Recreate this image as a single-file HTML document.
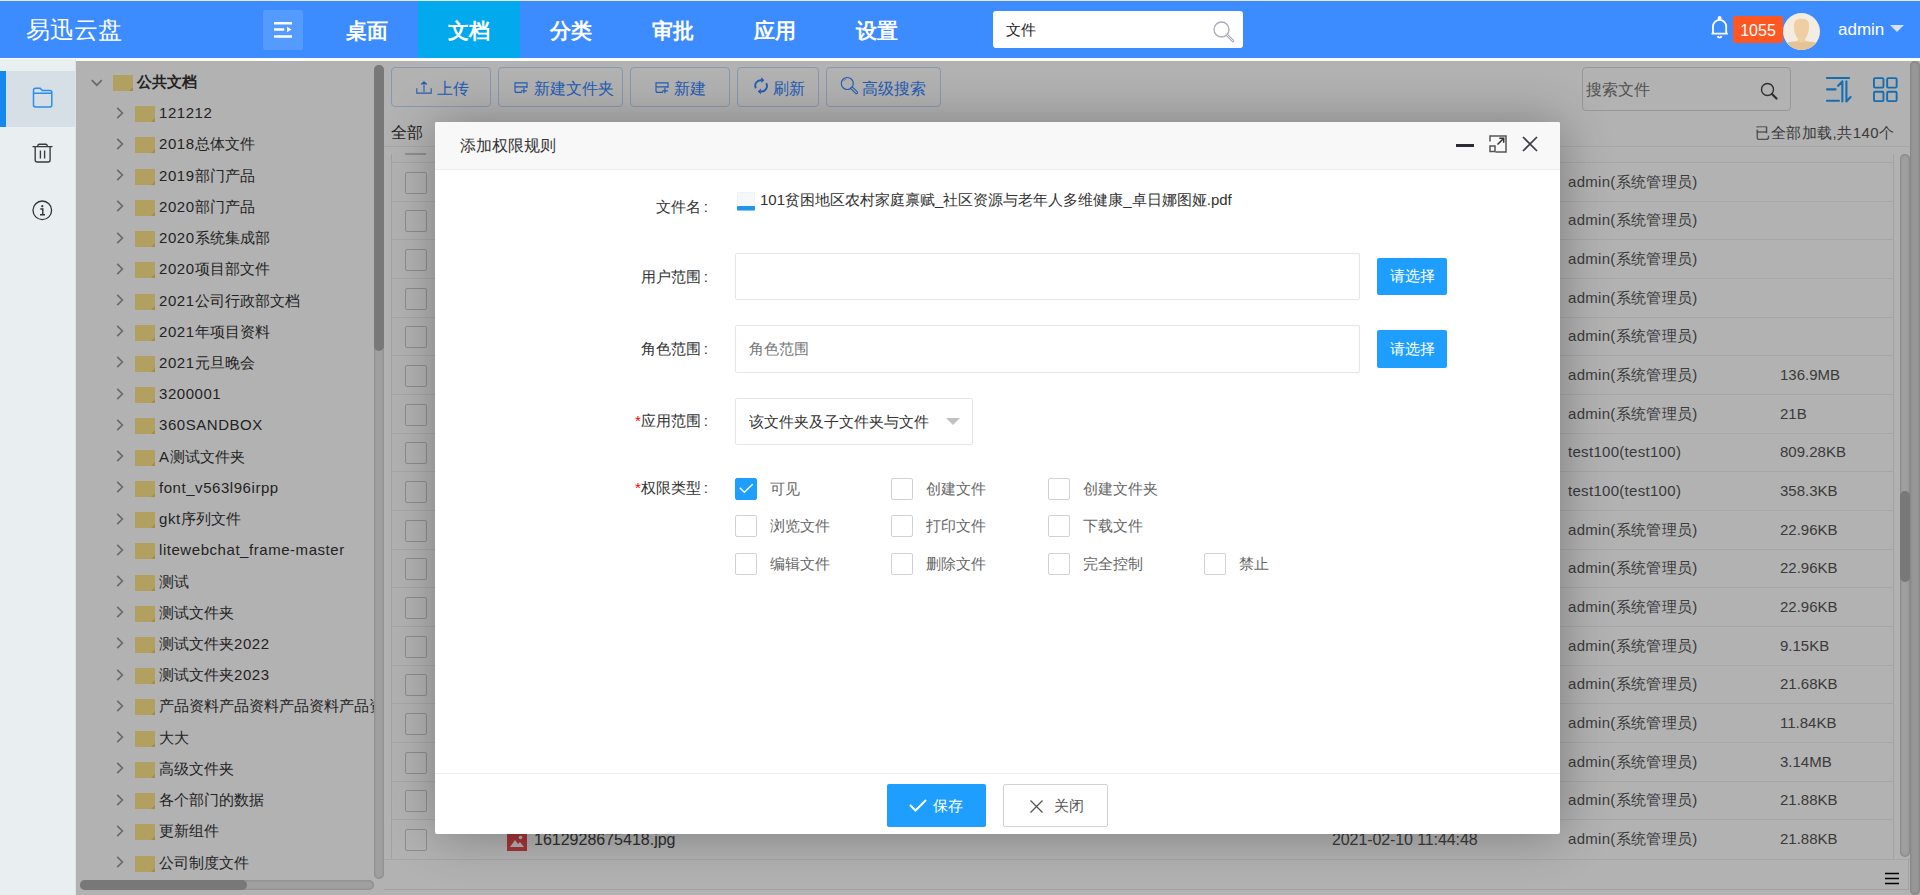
<!DOCTYPE html>
<html><head><meta charset="utf-8">
<style>
*{margin:0;padding:0;box-sizing:border-box}
html,body{width:1920px;height:895px;overflow:hidden;background:#fff;font-family:"Liberation Sans",sans-serif;color:#333}
.a{position:absolute}
#topline{left:0;top:0;width:1920px;height:1px;background:#ece6dc}
#header{left:0;top:1px;width:1920px;height:57px;background:#3d8cff;color:#fff}
#logo{left:26px;top:12px;font-size:24px;line-height:34px}
#tog{left:263px;top:9px;width:40px;height:40px;border-radius:3px;background:rgba(255,255,255,.12)}
.nav{top:0;height:57px;width:102px;line-height:59px;text-align:center;font-size:21px;font-weight:bold}
.nav.on{background:#02a9ed}
#hsearch{left:993px;top:10px;width:250px;height:37px;background:#fff;border-radius:3px}
#hsearch span{position:absolute;left:13px;top:9px;font-size:15px;line-height:20px;color:#222}
#badge{left:1733px;top:15px;width:50px;height:27px;background:#ff5722;border-radius:2px;font-size:16px;line-height:29px;text-align:center;color:#fff}
#avatar{left:1783px;top:12px;width:37px;height:37px;border-radius:50%;background:#f4ebe1;overflow:hidden}
#uname{left:1838px;top:17px;font-size:17px;line-height:24px;color:#fff}
#caret{left:1890px;top:24px;width:0;height:0;border-left:7px solid transparent;border-right:7px solid transparent;border-top:7px solid #d2e2ff}
#sidebar{left:0;top:59px;width:76px;height:836px;background:#e9eef1;border-right:1px solid #dfe3e6}
#sideon{left:0;top:12px;width:75px;height:56px;background:#d5dfe5}
#sideon i{position:absolute;left:0;top:0;width:6px;height:56px;background:#1488f0}
#main{left:76px;top:59px;width:1844px;height:836px;background:#fff}
.tr{left:0;height:31px;width:298px;white-space:nowrap;overflow:hidden;font-size:15px;line-height:31px;color:#333}
.chev{position:absolute;width:8px;height:8px;border-right:1.8px solid #8a8a8a;border-bottom:1.8px solid #8a8a8a}
.lat{letter-spacing:0.55px}
.fold{position:absolute;width:20px;height:16px;background:#ffe68c}
.fold:after{content:'';position:absolute;right:0;bottom:0;width:0;height:0;border-left:4px solid transparent;border-bottom:4px solid #eccb62}
.tbtn{top:8px;height:40px;border:1px solid #c0dcff;border-radius:4px;color:#3585ff;font-size:16px;line-height:42px}
.cb{width:22px;height:22px;border:1px solid #ccc;border-radius:2px;background:#fff}
.rl{height:1px;background:#f0f0f0}
.cell{font-size:15px;line-height:20px;color:#555;white-space:nowrap}
#mask{left:76px;top:61px;width:1844px;height:834px;background:rgba(0,0,0,.3)}
#modal{left:435px;top:122px;width:1125px;height:712px;background:#fff;border-radius:2px;box-shadow:1px 1px 50px rgba(0,0,0,.3)}
#mhead{left:0;top:0;width:1125px;height:48px;background:#f8f8f8;border-bottom:1px solid #eee;border-radius:2px 2px 0 0}
#mtitle{left:25px;top:13px;font-size:16px;line-height:22px;color:#333}
#mfoot{left:0;top:651px;width:1125px;height:1px;background:#eee}
.lab{width:200px;text-align:right;font-size:15px;line-height:20px;color:#333}
.lab b{color:#f00;font-weight:normal}
.col{font-style:normal;margin-left:3px;margin-right:-1px}
.inp{border:1px solid #e6e6e6;border-radius:2px;background:#fff}
.bbtn{background:#1e9fff;color:#fff;border-radius:2px;text-align:center;font-size:15px}
.ck{width:22px;height:22px;border:1px solid #d2d2d2;border-radius:2px;background:#fff}
.ckl{font-size:15px;line-height:20px;color:#666;white-space:nowrap}
</style></head>
<body>
<div id="topline" class="a"></div>
<div id="header" class="a">
<div id="logo" class="a">易迅云盘</div>
<div id="tog" class="a"><svg class="a" style="left:10px;top:12px" width="20" height="17" viewBox="0 0 20 17"><path d="M1 1.2H19M1 7.5H11.2M1 14.5H19" stroke="#fff" stroke-width="2.4"/><path d="M14 4.8L18.5 7.6L14 10.3Z" fill="#fff"/></svg></div>
<div class="a nav" style="left:316px">桌面</div>
<div class="a nav on" style="left:418px">文档</div>
<div class="a nav" style="left:520px">分类</div>
<div class="a nav" style="left:622px">审批</div>
<div class="a nav" style="left:724px">应用</div>
<div class="a nav" style="left:826px">设置</div>
<div id="hsearch" class="a"><span>文件</span><svg class="a" style="left:219px;top:9px" width="24" height="24" viewBox="0 0 24 24"><circle cx="9.5" cy="9.5" r="7.5" fill="none" stroke="#aab" stroke-width="1.3"/><path d="M15 15L21 21" stroke="#aab" stroke-width="2.6" stroke-linecap="round"/><path d="M14.8 14.8L21 21" stroke="#fff" stroke-width="0.8" stroke-linecap="round"/></svg></div>
<svg class="a" style="left:1710px;top:14px" width="20" height="25" viewBox="0 0 20 25"><circle cx="9.6" cy="3" r="2" fill="#fff"/><path d="M3 18.3V11.5A6.6 6.6 0 0 1 16.2 11.5V18.3M1.5 18.6H17.8" fill="none" stroke="#fff" stroke-width="1.8"/><path d="M7.5 21.3A2.4 2.4 0 0 0 11.7 21.3" fill="none" stroke="#fff" stroke-width="1.8"/></svg>
<div id="badge" class="a">1055</div>
<div id="avatar" class="a"><svg class="a" style="left:0;top:0" width="37" height="37" viewBox="0 0 37 37"><path d="M0 37V31Q8 28.5 14.5 28L15 26Q11.5 22 11 15V11Q11.5 5.8 18.5 5.8Q25.5 5.8 26 11V15Q25.5 22 22 26L22.5 28Q29 28.5 37 31V37Z" fill="#efcfa1"/><path d="M0 37V30.5Q8 28.5 14.5 28.5Q18.5 30.5 22.5 28.5Q29 28.5 37 30.5V37Z" fill="#e5c399"/></svg></div>
<div id="uname" class="a">admin</div>
<div id="caret" class="a"></div>
</div>
<div id="sidebar" class="a"><div id="sideon" class="a"><i></i></div>
<svg class="a" style="left:32px;top:28px" width="21" height="21" viewBox="0 0 21 21"><path d="M1.5 3.2Q1.5 1.2 3.5 1.2H8.2L10.2 3.4H18Q19.8 3.4 19.8 5.2V18.2Q19.8 19.9 18 19.9H3.5Q1.5 19.9 1.5 18V3.2ZM1.5 6.3H19.8" fill="none" stroke="#2a8ef0" stroke-width="1.5"/></svg>
<svg class="a" style="left:32px;top:84px" width="21" height="21" viewBox="0 0 21 21"><path d="M0.5 3.6H20.5M5.8 3.6V2.8Q5.8 1.2 7.4 1.2H13.6Q15.2 1.2 15.2 2.8V3.6M3.2 3.6V17Q3.2 19 5.2 19H16.1Q18.1 19 18.1 17V3.6M8.4 7.6V15.4M12.6 7.6V15.4" fill="none" stroke="#3a3a3a" stroke-width="1.35"/></svg>
<svg class="a" style="left:32px;top:141px" width="21" height="21" viewBox="0 0 21 21"><circle cx="10.3" cy="10.3" r="9.3" fill="none" stroke="#333" stroke-width="1.3"/><circle cx="10.3" cy="6.2" r="1.1" fill="#333"/><path d="M8.3 9H10.8V14.5M8 14.7H13" fill="none" stroke="#333" stroke-width="1.4"/></svg>
</div>
<div id="main" class="a"></div>
<div class="a" style="left:76px;top:61px;width:298px;height:818px;overflow:hidden">
<div class="a tr" style="top:5.00px;font-weight:bold"><svg class="a" style="left:14.5px;top:12.5px" width="12" height="8" viewBox="0 0 12 8"><path d="M0.8 1.2L5.8 6.2L10.8 1.2" fill="none" stroke="#999" stroke-width="1.7"/></svg><i class="fold" style="left:37px;top:9px"></i><span class="a" style="left:61px;top:0">公共文档</span></div>
<div class="a tr" style="top:36.22px"><svg class="a" style="left:39.5px;top:9.5px" width="8" height="13" viewBox="0 0 8 13"><path d="M1.2 0.8L6.4 6L1.2 11.2" fill="none" stroke="#999" stroke-width="1.7"/></svg><i class="fold" style="left:59px;top:9px"></i><span class="a" style="left:83px;top:0"><span class="lat">121212</span></span></div>
<div class="a tr" style="top:67.44px"><svg class="a" style="left:39.5px;top:9.5px" width="8" height="13" viewBox="0 0 8 13"><path d="M1.2 0.8L6.4 6L1.2 11.2" fill="none" stroke="#999" stroke-width="1.7"/></svg><i class="fold" style="left:59px;top:9px"></i><span class="a" style="left:83px;top:0"><span class="lat">2018</span>总体文件</span></div>
<div class="a tr" style="top:98.66px"><svg class="a" style="left:39.5px;top:9.5px" width="8" height="13" viewBox="0 0 8 13"><path d="M1.2 0.8L6.4 6L1.2 11.2" fill="none" stroke="#999" stroke-width="1.7"/></svg><i class="fold" style="left:59px;top:9px"></i><span class="a" style="left:83px;top:0"><span class="lat">2019</span>部门产品</span></div>
<div class="a tr" style="top:129.88px"><svg class="a" style="left:39.5px;top:9.5px" width="8" height="13" viewBox="0 0 8 13"><path d="M1.2 0.8L6.4 6L1.2 11.2" fill="none" stroke="#999" stroke-width="1.7"/></svg><i class="fold" style="left:59px;top:9px"></i><span class="a" style="left:83px;top:0"><span class="lat">2020</span>部门产品</span></div>
<div class="a tr" style="top:161.10px"><svg class="a" style="left:39.5px;top:9.5px" width="8" height="13" viewBox="0 0 8 13"><path d="M1.2 0.8L6.4 6L1.2 11.2" fill="none" stroke="#999" stroke-width="1.7"/></svg><i class="fold" style="left:59px;top:9px"></i><span class="a" style="left:83px;top:0"><span class="lat">2020</span>系统集成部</span></div>
<div class="a tr" style="top:192.32px"><svg class="a" style="left:39.5px;top:9.5px" width="8" height="13" viewBox="0 0 8 13"><path d="M1.2 0.8L6.4 6L1.2 11.2" fill="none" stroke="#999" stroke-width="1.7"/></svg><i class="fold" style="left:59px;top:9px"></i><span class="a" style="left:83px;top:0"><span class="lat">2020</span>项目部文件</span></div>
<div class="a tr" style="top:223.54px"><svg class="a" style="left:39.5px;top:9.5px" width="8" height="13" viewBox="0 0 8 13"><path d="M1.2 0.8L6.4 6L1.2 11.2" fill="none" stroke="#999" stroke-width="1.7"/></svg><i class="fold" style="left:59px;top:9px"></i><span class="a" style="left:83px;top:0"><span class="lat">2021</span>公司行政部文档</span></div>
<div class="a tr" style="top:254.76px"><svg class="a" style="left:39.5px;top:9.5px" width="8" height="13" viewBox="0 0 8 13"><path d="M1.2 0.8L6.4 6L1.2 11.2" fill="none" stroke="#999" stroke-width="1.7"/></svg><i class="fold" style="left:59px;top:9px"></i><span class="a" style="left:83px;top:0"><span class="lat">2021</span>年项目资料</span></div>
<div class="a tr" style="top:285.98px"><svg class="a" style="left:39.5px;top:9.5px" width="8" height="13" viewBox="0 0 8 13"><path d="M1.2 0.8L6.4 6L1.2 11.2" fill="none" stroke="#999" stroke-width="1.7"/></svg><i class="fold" style="left:59px;top:9px"></i><span class="a" style="left:83px;top:0"><span class="lat">2021</span>元旦晚会</span></div>
<div class="a tr" style="top:317.20px"><svg class="a" style="left:39.5px;top:9.5px" width="8" height="13" viewBox="0 0 8 13"><path d="M1.2 0.8L6.4 6L1.2 11.2" fill="none" stroke="#999" stroke-width="1.7"/></svg><i class="fold" style="left:59px;top:9px"></i><span class="a" style="left:83px;top:0"><span class="lat">3200001</span></span></div>
<div class="a tr" style="top:348.42px"><svg class="a" style="left:39.5px;top:9.5px" width="8" height="13" viewBox="0 0 8 13"><path d="M1.2 0.8L6.4 6L1.2 11.2" fill="none" stroke="#999" stroke-width="1.7"/></svg><i class="fold" style="left:59px;top:9px"></i><span class="a" style="left:83px;top:0"><span class="lat">360SANDBOX</span></span></div>
<div class="a tr" style="top:379.64px"><svg class="a" style="left:39.5px;top:9.5px" width="8" height="13" viewBox="0 0 8 13"><path d="M1.2 0.8L6.4 6L1.2 11.2" fill="none" stroke="#999" stroke-width="1.7"/></svg><i class="fold" style="left:59px;top:9px"></i><span class="a" style="left:83px;top:0"><span class="lat">A</span>测试文件夹</span></div>
<div class="a tr" style="top:410.86px"><svg class="a" style="left:39.5px;top:9.5px" width="8" height="13" viewBox="0 0 8 13"><path d="M1.2 0.8L6.4 6L1.2 11.2" fill="none" stroke="#999" stroke-width="1.7"/></svg><i class="fold" style="left:59px;top:9px"></i><span class="a" style="left:83px;top:0"><span class="lat">font_v563l96irpp</span></span></div>
<div class="a tr" style="top:442.08px"><svg class="a" style="left:39.5px;top:9.5px" width="8" height="13" viewBox="0 0 8 13"><path d="M1.2 0.8L6.4 6L1.2 11.2" fill="none" stroke="#999" stroke-width="1.7"/></svg><i class="fold" style="left:59px;top:9px"></i><span class="a" style="left:83px;top:0"><span class="lat">gkt</span>序列文件</span></div>
<div class="a tr" style="top:473.30px"><svg class="a" style="left:39.5px;top:9.5px" width="8" height="13" viewBox="0 0 8 13"><path d="M1.2 0.8L6.4 6L1.2 11.2" fill="none" stroke="#999" stroke-width="1.7"/></svg><i class="fold" style="left:59px;top:9px"></i><span class="a" style="left:83px;top:0"><span class="lat">litewebchat_frame-master</span></span></div>
<div class="a tr" style="top:504.52px"><svg class="a" style="left:39.5px;top:9.5px" width="8" height="13" viewBox="0 0 8 13"><path d="M1.2 0.8L6.4 6L1.2 11.2" fill="none" stroke="#999" stroke-width="1.7"/></svg><i class="fold" style="left:59px;top:9px"></i><span class="a" style="left:83px;top:0">测试</span></div>
<div class="a tr" style="top:535.74px"><svg class="a" style="left:39.5px;top:9.5px" width="8" height="13" viewBox="0 0 8 13"><path d="M1.2 0.8L6.4 6L1.2 11.2" fill="none" stroke="#999" stroke-width="1.7"/></svg><i class="fold" style="left:59px;top:9px"></i><span class="a" style="left:83px;top:0">测试文件夹</span></div>
<div class="a tr" style="top:566.96px"><svg class="a" style="left:39.5px;top:9.5px" width="8" height="13" viewBox="0 0 8 13"><path d="M1.2 0.8L6.4 6L1.2 11.2" fill="none" stroke="#999" stroke-width="1.7"/></svg><i class="fold" style="left:59px;top:9px"></i><span class="a" style="left:83px;top:0">测试文件夹<span class="lat">2022</span></span></div>
<div class="a tr" style="top:598.18px"><svg class="a" style="left:39.5px;top:9.5px" width="8" height="13" viewBox="0 0 8 13"><path d="M1.2 0.8L6.4 6L1.2 11.2" fill="none" stroke="#999" stroke-width="1.7"/></svg><i class="fold" style="left:59px;top:9px"></i><span class="a" style="left:83px;top:0">测试文件夹<span class="lat">2023</span></span></div>
<div class="a tr" style="top:629.40px"><svg class="a" style="left:39.5px;top:9.5px" width="8" height="13" viewBox="0 0 8 13"><path d="M1.2 0.8L6.4 6L1.2 11.2" fill="none" stroke="#999" stroke-width="1.7"/></svg><i class="fold" style="left:59px;top:9px"></i><span class="a" style="left:83px;top:0">产品资料产品资料产品资料产品资料产品资料</span></div>
<div class="a tr" style="top:660.62px"><svg class="a" style="left:39.5px;top:9.5px" width="8" height="13" viewBox="0 0 8 13"><path d="M1.2 0.8L6.4 6L1.2 11.2" fill="none" stroke="#999" stroke-width="1.7"/></svg><i class="fold" style="left:59px;top:9px"></i><span class="a" style="left:83px;top:0">大大</span></div>
<div class="a tr" style="top:691.84px"><svg class="a" style="left:39.5px;top:9.5px" width="8" height="13" viewBox="0 0 8 13"><path d="M1.2 0.8L6.4 6L1.2 11.2" fill="none" stroke="#999" stroke-width="1.7"/></svg><i class="fold" style="left:59px;top:9px"></i><span class="a" style="left:83px;top:0">高级文件夹</span></div>
<div class="a tr" style="top:723.06px"><svg class="a" style="left:39.5px;top:9.5px" width="8" height="13" viewBox="0 0 8 13"><path d="M1.2 0.8L6.4 6L1.2 11.2" fill="none" stroke="#999" stroke-width="1.7"/></svg><i class="fold" style="left:59px;top:9px"></i><span class="a" style="left:83px;top:0">各个部门的数据</span></div>
<div class="a tr" style="top:754.28px"><svg class="a" style="left:39.5px;top:9.5px" width="8" height="13" viewBox="0 0 8 13"><path d="M1.2 0.8L6.4 6L1.2 11.2" fill="none" stroke="#999" stroke-width="1.7"/></svg><i class="fold" style="left:59px;top:9px"></i><span class="a" style="left:83px;top:0">更新组件</span></div>
<div class="a tr" style="top:785.50px"><svg class="a" style="left:39.5px;top:9.5px" width="8" height="13" viewBox="0 0 8 13"><path d="M1.2 0.8L6.4 6L1.2 11.2" fill="none" stroke="#999" stroke-width="1.7"/></svg><i class="fold" style="left:59px;top:9px"></i><span class="a" style="left:83px;top:0">公司制度文件</span></div>
</div>
<div class="a" style="left:374px;top:65px;width:10px;height:814px;background:#e6e6e6;border-radius:5px;box-shadow:inset 0 0 3px rgba(0,0,0,.25)"></div>
<div class="a" style="left:374px;top:65px;width:10px;height:286px;background:#acacac;border-radius:5px"></div>
<div class="a" style="left:80px;top:880px;width:294px;height:10px;background:#e6e6e6;border-radius:5px;box-shadow:inset 0 0 3px rgba(0,0,0,.25)"></div>
<div class="a" style="left:80px;top:880px;width:167px;height:10px;background:#acacac;border-radius:5px"></div>
<div class="a tbtn" style="left:391px;top:67px;width:100px"><svg class="a" style="left:24px;top:13px" width="16" height="14" viewBox="0 0 16 14"><path d="M0.8 7.2V12.1H15.2V7.2M8 11V0.8M5.2 3.5L8 0.8L10.8 3.5" fill="none" stroke="#3585ff" stroke-width="1.1"/></svg><span class="a" style="left:45px;top:0">上传</span></div>
<div class="a tbtn" style="left:498px;top:67px;width:125px"><svg class="a" style="left:15px;top:14px" width="14" height="12" viewBox="0 0 14 12"><path d="M8 10.4H2.6Q1 10.4 1 8.8V0.8H13V6M1 4.8H13M9.9 5.8V11.3M7.2 8.9H12.9" fill="none" stroke="#3585ff" stroke-width="1.15"/></svg><span class="a" style="left:35px;top:0">新建文件夹</span></div>
<div class="a tbtn" style="left:630px;top:67px;width:100px"><svg class="a" style="left:24px;top:14px" width="14" height="12" viewBox="0 0 14 12"><path d="M8 10.4H2.6Q1 10.4 1 8.8V0.8H13V6M1 4.8H13M9.9 5.8V11.3M7.2 8.9H12.9" fill="none" stroke="#3585ff" stroke-width="1.15"/></svg><span class="a" style="left:43px;top:0">新建</span></div>
<div class="a tbtn" style="left:737px;top:67px;width:82px"><svg class="a" style="left:16px;top:9px" width="14" height="18" viewBox="0 0 14 18"><path d="M1.9 11.3A5.5 5.5 0 0 1 7.6 3.3M12.2 6.2A5.5 5.5 0 0 1 6.5 14.4" fill="none" stroke="#3585ff" stroke-width="1.9"/><path d="M7.2 0.3L10.4 3.2L7.2 6Z M6.9 11.5L3.7 14.4L6.9 17.3Z" fill="#3585ff"/></svg><span class="a" style="left:35px;top:0">刷新</span></div>
<div class="a tbtn" style="left:826px;top:67px;width:115px"><svg class="a" style="left:12px;top:7px" width="20" height="20" viewBox="0 0 20 20"><circle cx="8.3" cy="8.5" r="6" fill="none" stroke="#3585ff" stroke-width="1.15"/><path d="M12.9 13.1L17.4 17.5" stroke="#3585ff" stroke-width="3.3" stroke-linecap="round"/><path d="M12.9 13.1L17.4 17.5" stroke="#fff" stroke-width="1.1" stroke-linecap="round"/><path d="M4.6 6.2A4 4 0 0 1 7.5 4" fill="none" stroke="#3585ff" stroke-width="0.8" opacity=".6"/></svg><span class="a" style="left:35px;top:0">高级搜索</span></div>
<div class="a" style="left:1582px;top:67px;width:209px;height:44px;border:1px solid #d9d9d9;border-radius:4px;background:#fff"><span class="a" style="left:3px;top:12px;font-size:16px;line-height:20px;color:#757575">搜索文件</span><svg class="a" style="left:177px;top:14px" width="18" height="18" viewBox="0 0 18 18"><circle cx="7.5" cy="7.5" r="6" fill="none" stroke="#444" stroke-width="1.4"/><path d="M12 12L16.5 16.5" stroke="#444" stroke-width="2.2" stroke-linecap="round"/></svg></div>
<svg class="a" style="left:1826px;top:77px" width="26" height="26" viewBox="0 0 26 26"><path d="M1 1H23M1 12.4H9.6M1 23.8H13M16.35 4.4V24.5M16.35 4.4L12.1 8.8M20.4 4.4V24.5M20.4 24.5L24.6 20" fill="none" stroke="#1e9fff" stroke-width="2.1" stroke-linecap="round"/></svg>
<svg class="a" style="left:1872px;top:76px" width="27" height="27" viewBox="0 0 27 27"><g fill="none" stroke="#1e9fff" stroke-width="1.9"><rect x="1.95" y="2.1" width="9.5" height="9.5" rx="1.1"/><rect x="15.15" y="2.1" width="9.5" height="9.5" rx="1.1"/><rect x="1.95" y="15.8" width="9.5" height="9.3" rx="1.1"/><rect x="15.15" y="15.8" width="9.5" height="9.3" rx="1.1"/></g></svg>
<div class="a" style="left:391px;top:122.5px;font-size:16px;line-height:20px;color:#333">全部</div>
<div class="a" style="left:1755px;top:122.5px;font-size:15px;letter-spacing:0.5px;line-height:20px;color:#555">已全部加载,共140个</div>
<div class="a rl" style="left:384px;top:146px;width:1526px"></div>
<div class="a" style="left:391px;top:154px;width:1px;height:705px;background:#e8e8e8"></div>
<div class="a" style="left:1893px;top:154px;width:1px;height:705px;background:#e8e8e8"></div>
<div class="a" style="left:405px;top:153px;width:21px;height:2px;background:#ccc"></div>
<div class="a rl" style="left:392px;top:162.00px;width:1501px"></div>
<div class="a cb" style="left:405px;top:171.73px"></div>
<div class="a cell" style="left:1568px;top:171.83px;letter-spacing:0.3px">admin(系统管理员)</div>
<div class="a rl" style="left:392px;top:200.66px;width:1501px"></div>
<div class="a cb" style="left:405px;top:210.39px"></div>
<div class="a cell" style="left:1568px;top:210.49px;letter-spacing:0.3px">admin(系统管理员)</div>
<div class="a rl" style="left:392px;top:239.32px;width:1501px"></div>
<div class="a cb" style="left:405px;top:249.05px"></div>
<div class="a cell" style="left:1568px;top:249.15px;letter-spacing:0.3px">admin(系统管理员)</div>
<div class="a rl" style="left:392px;top:277.98px;width:1501px"></div>
<div class="a cb" style="left:405px;top:287.71px"></div>
<div class="a cell" style="left:1568px;top:287.81px;letter-spacing:0.3px">admin(系统管理员)</div>
<div class="a rl" style="left:392px;top:316.64px;width:1501px"></div>
<div class="a cb" style="left:405px;top:326.37px"></div>
<div class="a cell" style="left:1568px;top:326.47px;letter-spacing:0.3px">admin(系统管理员)</div>
<div class="a rl" style="left:392px;top:355.30px;width:1501px"></div>
<div class="a cb" style="left:405px;top:365.03px"></div>
<div class="a cell" style="left:1568px;top:365.13px;letter-spacing:0.3px">admin(系统管理员)</div>
<div class="a cell" style="left:1780px;top:365.13px">136.9MB</div>
<div class="a rl" style="left:392px;top:393.96px;width:1501px"></div>
<div class="a cb" style="left:405px;top:403.69px"></div>
<div class="a cell" style="left:1568px;top:403.79px;letter-spacing:0.3px">admin(系统管理员)</div>
<div class="a cell" style="left:1780px;top:403.79px">21B</div>
<div class="a rl" style="left:392px;top:432.62px;width:1501px"></div>
<div class="a cb" style="left:405px;top:442.35px"></div>
<div class="a cell" style="left:1568px;top:442.45px;letter-spacing:0.3px">test100(test100)</div>
<div class="a cell" style="left:1780px;top:442.45px">809.28KB</div>
<div class="a rl" style="left:392px;top:471.28px;width:1501px"></div>
<div class="a cb" style="left:405px;top:481.01px"></div>
<div class="a cell" style="left:1568px;top:481.11px;letter-spacing:0.3px">test100(test100)</div>
<div class="a cell" style="left:1780px;top:481.11px">358.3KB</div>
<div class="a rl" style="left:392px;top:509.94px;width:1501px"></div>
<div class="a cb" style="left:405px;top:519.67px"></div>
<div class="a cell" style="left:1568px;top:519.77px;letter-spacing:0.3px">admin(系统管理员)</div>
<div class="a cell" style="left:1780px;top:519.77px">22.96KB</div>
<div class="a rl" style="left:392px;top:548.60px;width:1501px"></div>
<div class="a cb" style="left:405px;top:558.33px"></div>
<div class="a cell" style="left:1568px;top:558.43px;letter-spacing:0.3px">admin(系统管理员)</div>
<div class="a cell" style="left:1780px;top:558.43px">22.96KB</div>
<div class="a rl" style="left:392px;top:587.26px;width:1501px"></div>
<div class="a cb" style="left:405px;top:596.99px"></div>
<div class="a cell" style="left:1568px;top:597.09px;letter-spacing:0.3px">admin(系统管理员)</div>
<div class="a cell" style="left:1780px;top:597.09px">22.96KB</div>
<div class="a rl" style="left:392px;top:625.92px;width:1501px"></div>
<div class="a cb" style="left:405px;top:635.65px"></div>
<div class="a cell" style="left:1568px;top:635.75px;letter-spacing:0.3px">admin(系统管理员)</div>
<div class="a cell" style="left:1780px;top:635.75px">9.15KB</div>
<div class="a rl" style="left:392px;top:664.58px;width:1501px"></div>
<div class="a cb" style="left:405px;top:674.31px"></div>
<div class="a cell" style="left:1568px;top:674.41px;letter-spacing:0.3px">admin(系统管理员)</div>
<div class="a cell" style="left:1780px;top:674.41px">21.68KB</div>
<div class="a rl" style="left:392px;top:703.24px;width:1501px"></div>
<div class="a cb" style="left:405px;top:712.97px"></div>
<div class="a cell" style="left:1568px;top:713.07px;letter-spacing:0.3px">admin(系统管理员)</div>
<div class="a cell" style="left:1780px;top:713.07px">11.84KB</div>
<div class="a rl" style="left:392px;top:741.90px;width:1501px"></div>
<div class="a cb" style="left:405px;top:751.63px"></div>
<div class="a cell" style="left:1568px;top:751.73px;letter-spacing:0.3px">admin(系统管理员)</div>
<div class="a cell" style="left:1780px;top:751.73px">3.14MB</div>
<div class="a rl" style="left:392px;top:780.56px;width:1501px"></div>
<div class="a cb" style="left:405px;top:790.29px"></div>
<div class="a cell" style="left:1568px;top:790.39px;letter-spacing:0.3px">admin(系统管理员)</div>
<div class="a cell" style="left:1780px;top:790.39px">21.88KB</div>
<div class="a rl" style="left:392px;top:819.22px;width:1501px"></div>
<div class="a cb" style="left:405px;top:828.95px"></div>
<div class="a cell" style="left:1568px;top:829.05px;letter-spacing:0.3px">admin(系统管理员)</div>
<div class="a cell" style="left:1780px;top:829.05px">21.88KB</div>
<div class="a rl" style="left:384px;top:858.5px;width:1526px"></div>
<svg class="a" style="left:507px;top:832px" width="20" height="19" viewBox="0 0 20 19"><rect width="20" height="19" fill="#ea4b50"/><path d="M3 15L8 8L11 12L13 10L17 15Z" fill="#fff"/><circle cx="13.5" cy="5.5" r="1.8" fill="#fff"/></svg>
<div class="a cell" style="left:534px;top:829.5px;font-size:16px;color:#444">1612928675418.jpg</div>
<div class="a cell" style="left:1332px;top:829.5px;font-size:16px;letter-spacing:-0.1px">2021-02-10 11:44:48</div>
<div class="a" style="left:384px;top:859px;width:1525px;height:31px;border-right:1px solid #e8e8e8;border-bottom:1px solid #e8e8e8"></div>
<svg class="a" style="left:1885px;top:872px" width="14" height="13" viewBox="0 0 14 13"><path d="M0 1.5H14M0 6.5H14M0 11.5H14" stroke="#000" stroke-width="1.6"/></svg>
<div class="a" style="left:1900px;top:154px;width:10px;height:703px;background:#e4e4e4;border-radius:5px;box-shadow:inset 0 0 3px rgba(0,0,0,.3)"></div>
<div class="a" style="left:1900px;top:491px;width:10px;height:91px;background:#acacac;border-radius:5px"></div>
<div class="a" style="left:1910px;top:61px;width:10px;height:834px;background:#d8d8d8;border-radius:5px;box-shadow:inset 0 0 3px rgba(0,0,0,.25)"></div>
<div id="mask" class="a"></div>
<div id="modal" class="a">
<div id="mhead" class="a"><div id="mtitle" class="a">添加权限规则</div></div>
<div class="a" style="left:1021px;top:22px;width:18px;height:3px;background:#2b2b3a"></div>
<svg class="a" style="left:1054px;top:13px" width="18" height="18" viewBox="0 0 18 18"><path d="M1 6.5V1H17V17H6.5" fill="none" stroke="#555" stroke-width="1.5"/><rect x="1" y="11" width="5" height="5.5" fill="none" stroke="#555" stroke-width="1.5"/><path d="M8.5 9.5L14.5 3.5M10.3 3.3H14.7V7.7" fill="none" stroke="#333" stroke-width="1.5"/></svg>
<svg class="a" style="left:1087px;top:14px" width="16" height="16" viewBox="0 0 16 16"><path d="M1 1L15 15M15 1L1 15" stroke="#3a3a48" stroke-width="1.7"/></svg>
<div class="a lab" style="left:72px;top:74.5px">文件名<i class="col">:</i></div>
<div class="a lab" style="left:72px;top:144.5px">用户范围<i class="col">:</i></div>
<div class="a lab" style="left:72px;top:216.5px">角色范围<i class="col">:</i></div>
<div class="a lab" style="left:72px;top:289.0px"><b>*</b>应用范围<i class="col">:</i></div>
<div class="a lab" style="left:72px;top:355.5px"><b>*</b>权限类型<i class="col">:</i></div>
<svg class="a" style="left:302px;top:70px" width="18" height="19" viewBox="0 0 18 19"><rect x="0.5" y="0.5" width="17" height="18" fill="#f5f8fb" stroke="#f0f3f6"/><rect x="0" y="14" width="18" height="4.5" rx="1" fill="#1e96eb"/></svg>
<div class="a" style="left:325px;top:67.5px;font-size:15px;line-height:20px;color:#333;white-space:nowrap">101贫困地区农村家庭禀赋_社区资源与老年人多维健康_卓日娜图娅.pdf</div>
<div class="a inp" style="left:300px;top:131px;width:625px;height:47px"></div>
<div class="a inp" style="left:300px;top:203px;width:625px;height:48px"><span class="a" style="left:13px;top:13px;font-size:15px;line-height:20px;color:#777">角色范围</span></div>
<div class="a bbtn" style="left:942px;top:136px;width:70px;height:37px;line-height:36px">请选择</div>
<div class="a bbtn" style="left:942px;top:208px;width:70px;height:38px;line-height:37px">请选择</div>
<div class="a inp" style="left:300px;top:276px;width:238px;height:47px"><span class="a" style="left:13px;top:12.5px;font-size:15px;line-height:20px;color:#333;white-space:nowrap">该文件夹及子文件夹与文件</span><i class="a" style="left:210px;top:19px;width:0;height:0;border-left:7px solid transparent;border-right:7px solid transparent;border-top:7px solid #c2c2c2"></i></div>
<div class="a ck" style="left:300.0px;top:356.0px;background:#1e9fff;border-color:#1e9fff"><svg class="a" style="left:3px;top:4px" width="15" height="11" viewBox="0 0 15 11"><path d="M0.8 4.8L5.3 9.3L13.7 1.3" fill="none" stroke="#fff" stroke-width="1.35"/></svg></div>
<div class="a ckl" style="left:335.0px;top:357.0px">可见</div>
<div class="a ck" style="left:456.3px;top:356.0px"></div>
<div class="a ckl" style="left:491.3px;top:357.0px">创建文件</div>
<div class="a ck" style="left:613.0px;top:356.0px"></div>
<div class="a ckl" style="left:648.0px;top:357.0px">创建文件夹</div>
<div class="a ck" style="left:300.0px;top:393.3px"></div>
<div class="a ckl" style="left:335.0px;top:394.3px">浏览文件</div>
<div class="a ck" style="left:456.3px;top:393.3px"></div>
<div class="a ckl" style="left:491.3px;top:394.3px">打印文件</div>
<div class="a ck" style="left:613.0px;top:393.3px"></div>
<div class="a ckl" style="left:648.0px;top:394.3px">下载文件</div>
<div class="a ck" style="left:300.0px;top:431.3px"></div>
<div class="a ckl" style="left:335.0px;top:432.3px">编辑文件</div>
<div class="a ck" style="left:456.3px;top:431.3px"></div>
<div class="a ckl" style="left:491.3px;top:432.3px">删除文件</div>
<div class="a ck" style="left:613.0px;top:431.3px"></div>
<div class="a ckl" style="left:648.0px;top:432.3px">完全控制</div>
<div class="a ck" style="left:769.0px;top:431.3px"></div>
<div class="a ckl" style="left:804.0px;top:432.3px">禁止</div>
<div id="mfoot" class="a"></div>
<div class="a bbtn" style="left:452px;top:662px;width:99px;height:43px;line-height:43px;font-size:15px"><svg class="a" style="left:22px;top:15px" width="18" height="13" viewBox="0 0 18 13"><path d="M1 6L6.5 11.5L17 1" fill="none" stroke="#fff" stroke-width="2"/></svg><span class="a" style="left:46px;top:0">保存</span></div>
<div class="a" style="left:568px;top:662px;width:105px;height:43px;border:1px solid #d2d2d2;border-radius:2px;background:#fff;color:#555;font-size:15px;line-height:41px"><svg class="a" style="left:26px;top:15px" width="13" height="13" viewBox="0 0 13 13"><path d="M0.5 0.5L12.5 12.5M12.5 0.5L0.5 12.5" stroke="#555" stroke-width="1.3"/></svg><span class="a" style="left:50px;top:0">关闭</span></div>
</div>
</body></html>
